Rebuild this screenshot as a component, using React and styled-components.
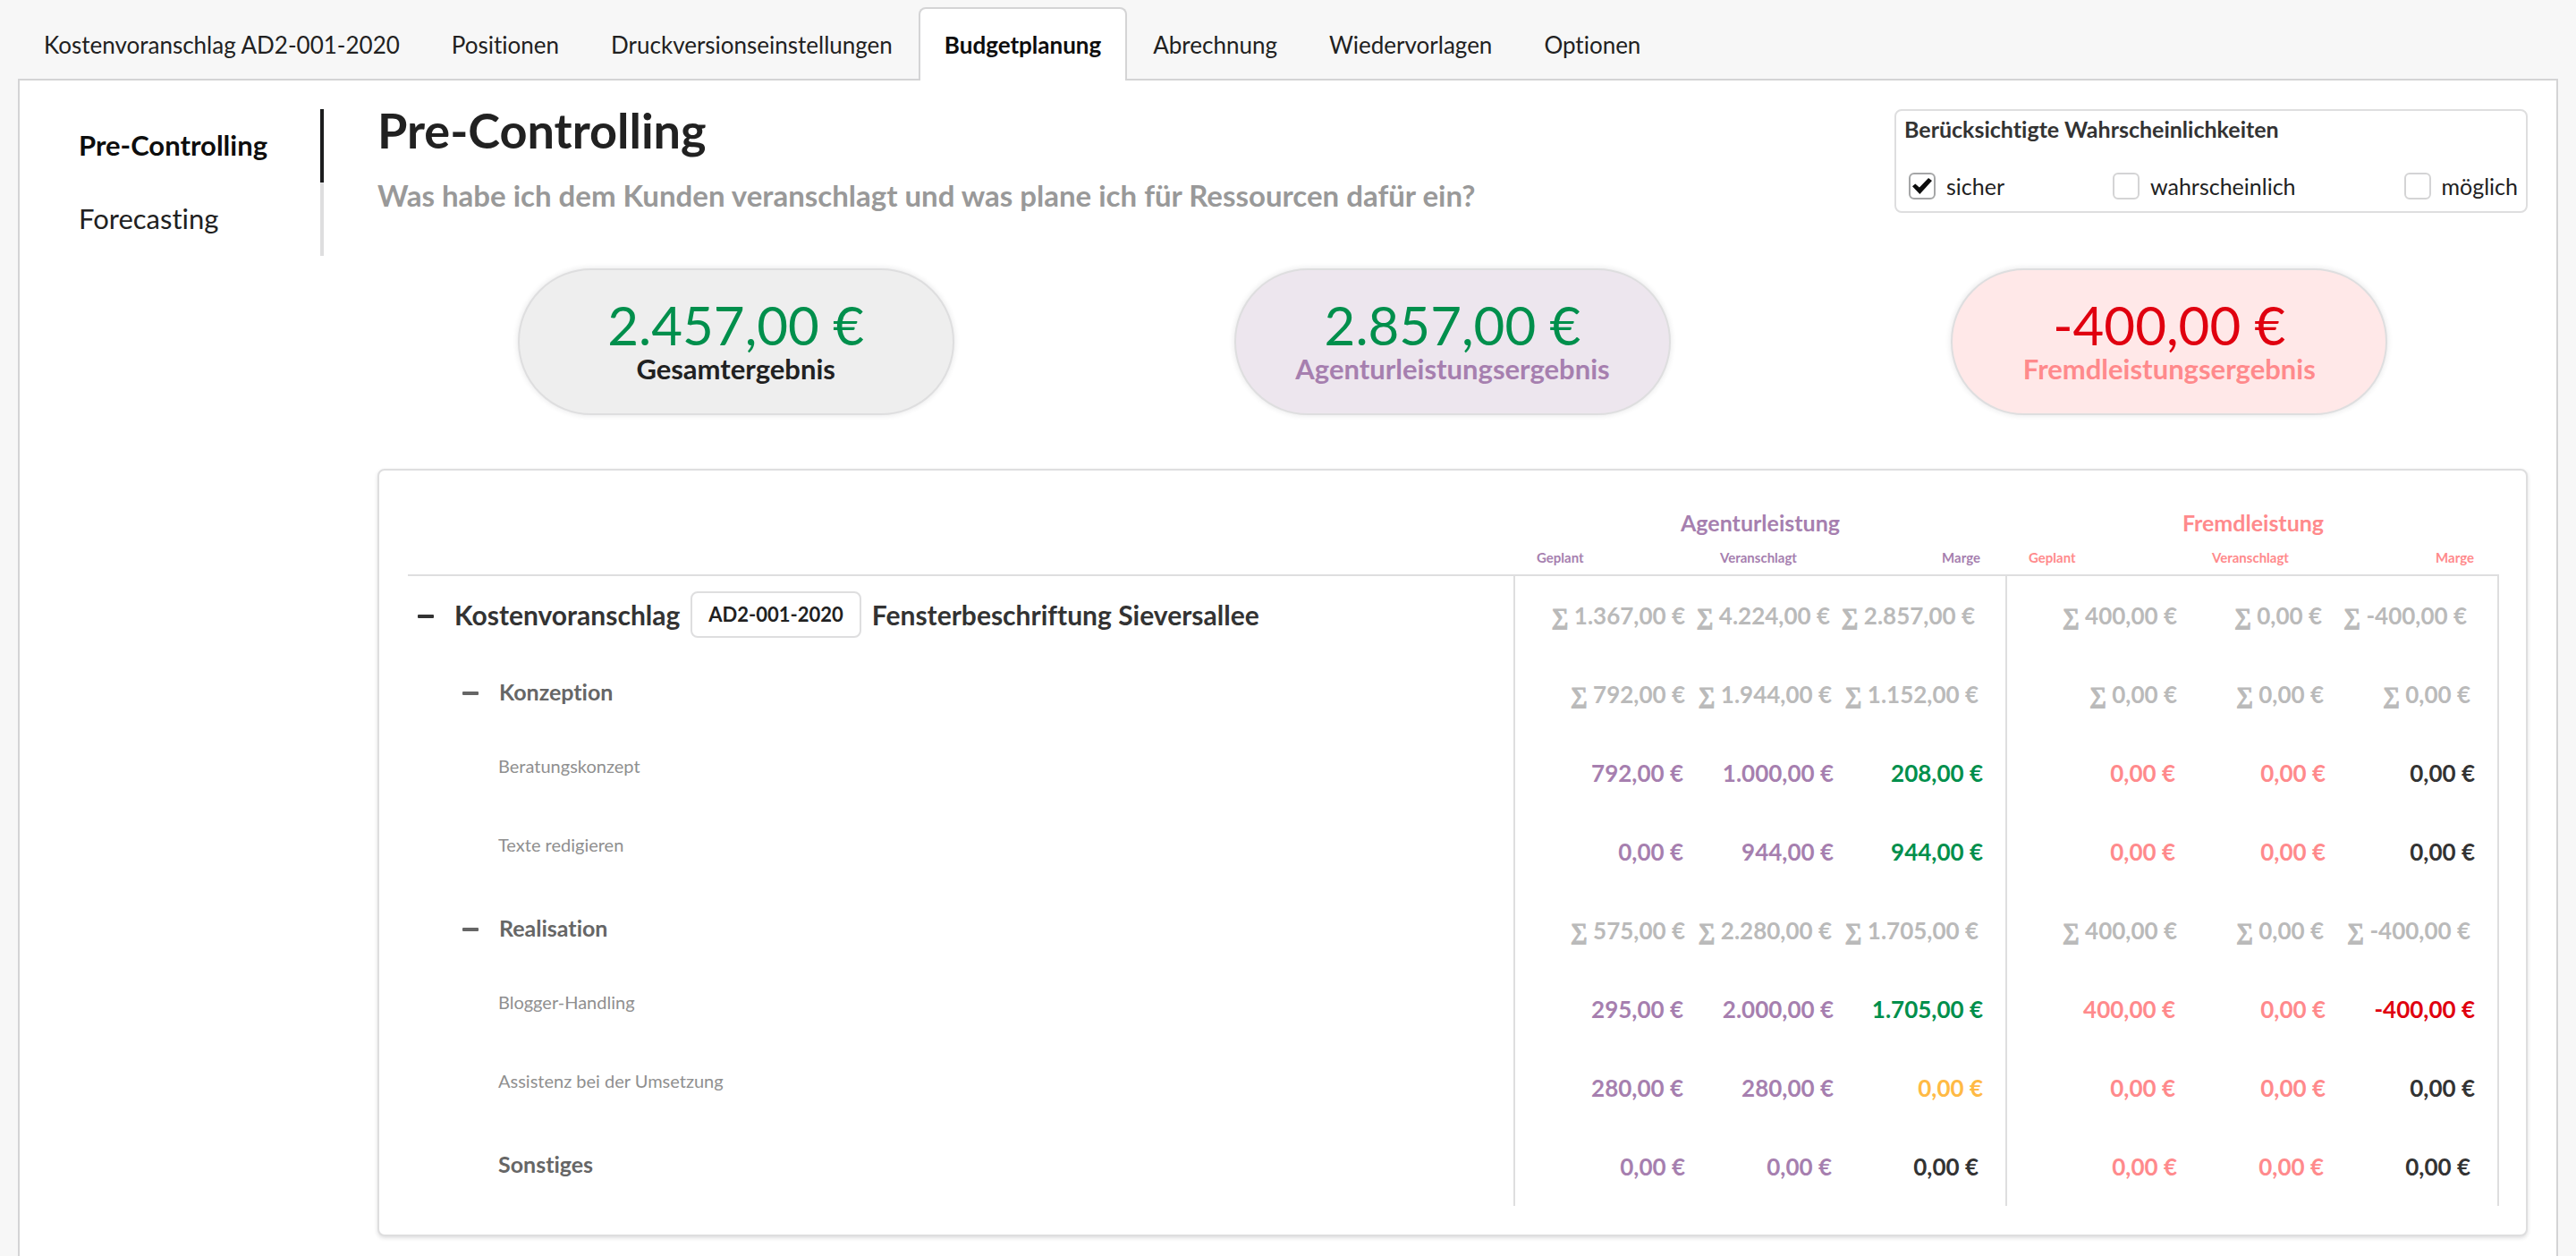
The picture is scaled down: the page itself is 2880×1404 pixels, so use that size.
import React, { useState } from "react";
import styled, { createGlobalStyle } from "styled-components";

const color = {
  line: "#dededf",
  panelLine: "#d4d4d5",
  text: "#212121",
  strong: "#333333",
  agency: "#a67faf",
  external: "#ff8a8c",
  sum: "#bababa",
  good: "#008f4c",
  bad: "#e0000f",
  even: "#ffba45",
};

const GlobalStyle = createGlobalStyle`
  *, *::before, *::after { box-sizing: border-box; }
  body {
    margin: 0;
    background: #f7f7f7;
    color: ${color.text};
    font-family: Lato, "Liberation Sans", sans-serif;
    font-size: 26px;
    font-variant-ligatures: none;
    line-height: 36px;
  }
  button, input { font: inherit; font-variant-ligatures: none; }
`;

const Page = styled.div`
  display: flex;
  flex-direction: column;
  min-height: 100vh;
  padding: 8px 20px 0;
`;

const Tabs = styled.nav`
  display: flex;
  position: relative;
  z-index: 1;
  margin-bottom: -2px;
`;

const Tab = styled.a`
  height: 82px;
  padding: 22px 27px 0;
  border: 2px solid ${(p) => (p.$active ? color.panelLine : "transparent")};
  border-bottom: 0;
  border-radius: 8px 8px 0 0;
  background: ${(p) => (p.$active ? "#ffffff" : "transparent")};
  color: ${(p) => (p.$active ? "#0d0d0d" : color.text)};
  font-weight: ${(p) => (p.$active ? 700 : 400)};
  text-decoration: none;
  white-space: nowrap;
`;

const Panel = styled.main`
  display: flex;
  flex: 1;
  align-items: flex-start;
  gap: 60px;
  padding: 32px 32px 20px 32px;
  border: 2px solid ${color.panelLine};
  border-bottom: 0;
  background: #ffffff;
`;

const SideNav = styled.nav`
  display: flex;
  flex: 0 0 308px;
  flex-direction: column;
`;

const SideLink = styled.a`
  height: 82px;
  padding: 22px 32px 0 34px;
  border-right: 4px solid ${(p) => (p.$active ? "#1b1c1d" : "#dededf")};
  color: ${(p) => (p.$active ? "#0d0d0d" : color.text)};
  font-size: 31px;
  font-weight: ${(p) => (p.$active ? 700 : 400)};
  text-decoration: none;
`;

const Content = styled.div`
  flex: 1;
  min-width: 0;
`;

const Header = styled.header`
  display: flex;
  align-items: flex-start;
  justify-content: space-between;
`;

const Title = styled.h1`
  margin: 0;
  font-size: 54px;
  font-weight: 700;
  line-height: 48px;
`;

const Subtitle = styled.p`
  margin: 28px 0 0;
  color: #999999;
  font-size: 33px;
  font-weight: 700;
  line-height: 40px;
`;

const FilterBox = styled.fieldset`
  display: flex;
  flex-direction: column;
  gap: 28px;
  width: 708px;
  min-width: 0;
  margin: 0;
  padding: 2px 9px 10px;
  border: 2px solid ${color.line};
  border-radius: 8px;
`;

const FilterTitle = styled.legend`
  float: left;
  padding: 0;
  color: ${color.strong};
  font-size: 25px;
  font-weight: 700;
`;

const FilterOptions = styled.div`
  display: flex;
  justify-content: space-between;
  clear: both;
  padding-left: 5px;
`;

const Option = styled.label`
  display: flex;
  align-items: center;
  gap: 12px;
  font-size: 25px;
`;

const CheckBox = styled.input`
  appearance: none;
  display: grid;
  place-content: center;
  width: 30px;
  height: 30px;
  margin: 0;
  border: 2px solid #d4d4d5;
  border-radius: 6px;
  background: #ffffff;

  &:checked {
    border-color: #a5a6a7;
  }

  &:checked::before {
    content: "";
    width: 22px;
    height: 18px;
    background: #0d0d0d;
    clip-path: polygon(0 52%, 15% 36%, 36% 58%, 82% 0, 100% 16%, 38% 100%);
  }
`;

const Results = styled.section`
  display: grid;
  grid-template-columns: repeat(3, 1fr);
  justify-items: center;
  margin: 62px 0 60px;
`;

const Pill = styled.div`
  display: flex;
  flex-direction: column;
  align-items: center;
  width: 488px;
  height: 164px;
  padding-top: 30px;
  border: 2px solid ${color.line};
  border-radius: 82px;
  background: ${(p) => p.$background};
  box-shadow: 0 0 6px rgba(34, 36, 38, 0.12);
`;

const PillValue = styled.div`
  color: ${(p) => p.$color};
  font-size: 60px;
  line-height: 62px;
`;

const PillLabel = styled.div`
  color: ${(p) => p.$color};
  font-size: 31px;
  font-weight: 700;
`;

const Card = styled.section`
  padding: 32px 30px 32px 32px;
  border: 2px solid ${color.line};
  border-radius: 8px;
  background: #ffffff;
  box-shadow: 0 2px 4px rgba(34, 36, 38, 0.15);
`;

const Table = styled.table`
  width: 100%;
  table-layout: fixed;
  border-collapse: separate;
  border-spacing: 0;
`;

const Col = styled.col`
  width: ${(p) => p.$width};
`;

const GroupHead = styled.th`
  height: 50px;
  padding: 2px 0 0 2px;
  color: ${(p) => p.$color};
  font-size: 25px;
  font-weight: 700;
  text-align: center;
`;

const subHeadLayout = {
  start: "padding: 0 0 4px 26px; text-align: left;",
  middle: "padding: 0 12px 4px 0; text-align: center;",
  end: "padding: 0 28px 4px 0; text-align: right;",
};

const SubHead = styled.th`
  height: 36px;
  ${(p) => subHeadLayout[p.$place]}
  border-bottom: 2px solid ${color.line};
  color: ${(p) => p.$color};
  font-size: 15px;
  font-weight: 700;
  line-height: 20px;
`;

const NameHead = styled.th`
  border-bottom: 2px solid ${color.line};
`;

const nameLayout = [
  "padding: 0 0 2px 8px; color: #333333; font-size: 30px; font-weight: 700;",
  "padding: 0 0 6px 58px; color: #666666; font-size: 25px; font-weight: 700;",
  "padding: 0 0 16px 101px; color: #8f8f8f; font-size: 20px; font-weight: 400;",
];

const NameCell = styled.th`
  height: 88px;
  ${(p) => nameLayout[p.$level]}
  text-align: left;
`;

const NameLine = styled.div`
  display: flex;
  align-items: center;
  padding-left: ${(p) => (p.$indent ? "43px" : "0")};
`;

const Toggle = styled.button`
  display: flex;
  align-items: center;
  width: 44px;
  height: 36px;
  padding: 4px 0 0 2px;
  border: 0;
  background: none;
  color: inherit;
`;

const Chip = styled.button`
  height: 52px;
  margin: 0 12px;
  padding: 0 18px;
  border: 2px solid ${color.line};
  border-radius: 8px;
  background: #ffffff;
  color: ${color.text};
  font-size: 22px;
  font-weight: 700;
`;

const valuePadding = [
  [6, 8, 34],
  [6, 6, 30],
  [8, 4, 25],
];

const ValueCell = styled.td`
  height: 88px;
  padding: 0 ${(p) => valuePadding[p.$level][p.$index]}px 0 0;
  border: 0 solid ${color.line};
  border-left-width: ${(p) => (p.$index === 0 ? "2px" : "0")};
  border-right-width: ${(p) => (p.$last ? "2px" : "0")};
  color: ${(p) => p.$color};
  font-weight: 700;
  text-align: right;
  white-space: nowrap;
`;

const Sigma = styled.span`
  font-family: "Liberation Serif", serif;
  font-size: 26px;
  font-weight: 700;
  line-height: 26px;
  -webkit-text-stroke: 1px currentColor;
`;

const tabs = [
  "Kostenvoranschlag AD2-001-2020",
  "Positionen",
  "Druckversionseinstellungen",
  "Budgetplanung",
  "Abrechnung",
  "Wiedervorlagen",
  "Optionen",
];

const results = [
  { value: "2.457,00 €", label: "Gesamtergebnis", tone: color.good, labelTone: color.text, background: "#eeeeee" },
  { value: "2.857,00 €", label: "Agenturleistungsergebnis", tone: color.good, labelTone: color.agency, background: "#ede6ee" },
  { value: "-400,00 €", label: "Fremdleistungsergebnis", tone: color.bad, labelTone: color.external, background: "#ffe8e8" },
];

const groups = [
  { name: "Agenturleistung", tone: color.agency },
  { name: "Fremdleistung", tone: color.external },
];

const rows = [
  { level: 0, name: "Kostenvoranschlag", number: "AD2-001-2020", title: "Fensterbeschriftung Sieversallee", open: true, sum: true, values: ["1.367,00", "4.224,00", "2.857,00", "400,00", "0,00", "-400,00"] },
  { level: 1, name: "Konzeption", open: true, sum: true, values: ["792,00", "1.944,00", "1.152,00", "0,00", "0,00", "0,00"] },
  { level: 2, name: "Beratungskonzept", values: ["792,00", "1.000,00", "208,00", "0,00", "0,00", "0,00"], margins: [color.good, color.strong] },
  { level: 2, name: "Texte redigieren", values: ["0,00", "944,00", "944,00", "0,00", "0,00", "0,00"], margins: [color.good, color.strong] },
  { level: 1, name: "Realisation", open: true, sum: true, values: ["575,00", "2.280,00", "1.705,00", "400,00", "0,00", "-400,00"] },
  { level: 2, name: "Blogger-Handling", values: ["295,00", "2.000,00", "1.705,00", "400,00", "0,00", "-400,00"], margins: [color.good, color.bad] },
  { level: 2, name: "Assistenz bei der Umsetzung", values: ["280,00", "280,00", "0,00", "0,00", "0,00", "0,00"], margins: [color.even, color.strong] },
  { level: 1, name: "Sonstiges", values: ["0,00", "0,00", "0,00", "0,00", "0,00", "0,00"], margins: [color.strong, color.strong] },
];

function toneOf(row, index) {
  if (row.sum) return color.sum;
  const group = Math.floor(index / 3);
  return index % 3 === 2 ? row.margins[group] : groups[group].tone;
}

function MinusIcon() {
  return (
    <svg width="20" height="6" viewBox="0 0 20 6" aria-hidden="true">
      <rect x="1" y="1" width="18" height="4" rx="1" fill="currentColor" />
    </svg>
  );
}

function BudgetRow({ row }) {
  return (
    <tr>
      <NameCell scope="row" $level={row.level}>
        <NameLine $indent={row.level === 1 && !row.open}>
          {row.open && (
            <Toggle type="button" aria-label={row.name + " einklappen"}>
              <MinusIcon />
            </Toggle>
          )}
          <span>{row.name}</span>
          {row.number && <Chip type="button">{row.number}</Chip>}
          {row.title && <span>{row.title}</span>}
        </NameLine>
      </NameCell>
      {row.values.map((value, i) => (
        <ValueCell key={i} $level={row.level} $index={i % 3} $last={i === 5} $color={toneOf(row, i)}>
          {row.sum && <Sigma>∑ </Sigma>}
          {value} €
        </ValueCell>
      ))}
    </tr>
  );
}

export default function App() {
  const [checked, setChecked] = useState({ sicher: true, wahrscheinlich: false, möglich: false });

  return (
    <>
      <GlobalStyle />
      <Page>
        <Tabs>
          {tabs.map((tab) => (
            <Tab key={tab} href="#" $active={tab === "Budgetplanung"}>
              {tab}
            </Tab>
          ))}
        </Tabs>
        <Panel>
          <SideNav>
            <SideLink href="#" $active>Pre-Controlling</SideLink>
            <SideLink href="#">Forecasting</SideLink>
          </SideNav>
          <Content>
            <Header>
              <div>
                <Title>Pre-Controlling</Title>
                <Subtitle>Was habe ich dem Kunden veranschlagt und was plane ich für Ressourcen dafür ein?</Subtitle>
              </div>
              <FilterBox>
                <FilterTitle>Berücksichtigte Wahrscheinlichkeiten</FilterTitle>
                <FilterOptions>
                  {Object.keys(checked).map((name) => (
                    <Option key={name}>
                      <CheckBox
                        type="checkbox"
                        checked={checked[name]}
                        onChange={() => setChecked({ ...checked, [name]: !checked[name] })}
                      />
                      {name}
                    </Option>
                  ))}
                </FilterOptions>
              </FilterBox>
            </Header>
            <Results>
              {results.map((r) => (
                <Pill key={r.label} $background={r.background}>
                  <PillValue $color={r.tone}>{r.value}</PillValue>
                  <PillLabel $color={r.labelTone}>{r.label}</PillLabel>
                </Pill>
              ))}
            </Results>
            <Card>
              <Table>
                <colgroup>
                  <Col $width="auto" />
                  <Col $width="198px" />
                  <Col $width="164px" />
                  <Col $width="188px" />
                  <Col $width="198px" />
                  <Col $width="164px" />
                  <Col $width="190px" />
                </colgroup>
                <thead>
                  <tr>
                    <NameHead rowSpan={2} />
                    {groups.map((g) => (
                      <GroupHead key={g.name} colSpan={3} scope="colgroup" $color={g.tone}>{g.name}</GroupHead>
                    ))}
                  </tr>
                  <tr>
                    {groups.map((g) => (
                      <React.Fragment key={g.name}>
                        <SubHead scope="col" $place="start" $color={g.tone}>Geplant</SubHead>
                        <SubHead scope="col" $place="middle" $color={g.tone}>Veranschlagt</SubHead>
                        <SubHead scope="col" $place="end" $color={g.tone}>Marge</SubHead>
                      </React.Fragment>
                    ))}
                  </tr>
                </thead>
                <tbody>
                  {rows.map((row) => (
                    <BudgetRow key={row.name} row={row} />
                  ))}
                </tbody>
              </Table>
            </Card>
          </Content>
        </Panel>
      </Page>
    </>
  );
}
